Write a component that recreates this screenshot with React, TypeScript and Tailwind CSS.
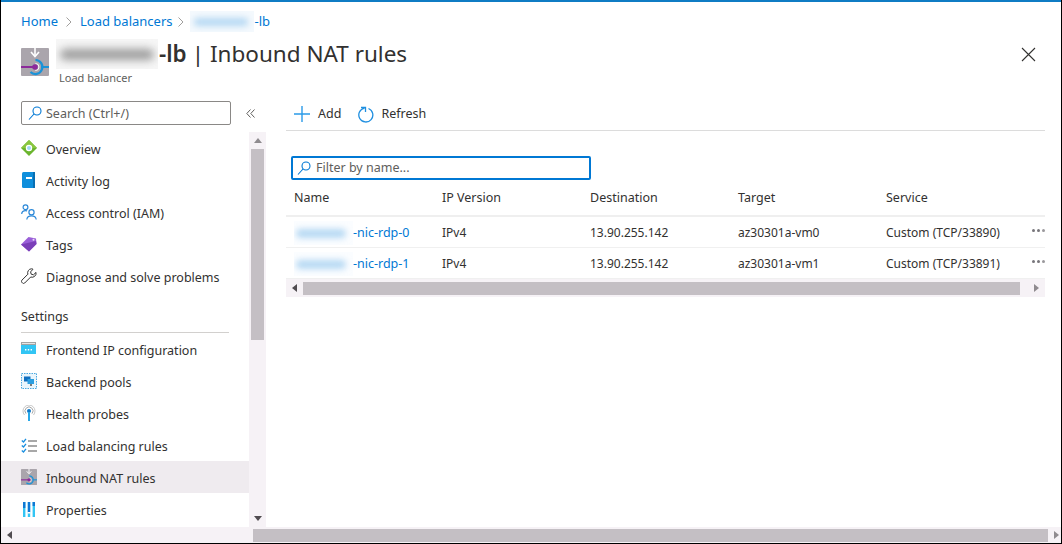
const COLUMNS = ["Name", "IP Version", "Destination", "Target", "Service"];

const ROWS = [
  { nic: "-nic-rdp-0", target: "az30301a-vm0", service: "Custom (TCP/33890)" },
  { nic: "-nic-rdp-1", target: "az30301a-vm1", service: "Custom (TCP/33891)" },
];

function LbIcon({ size }: { size: number }) {
  return (
    <svg width={size} height={size} viewBox="0 0 28 28">
      <rect width="28" height="28" rx="1" fill="#aaa5ac" />
      <path d="M14 0v7" stroke="#fff" strokeWidth="1.6" />
      <path d="M10 4l4 4.5L18 4" stroke="#fff" strokeWidth="1.6" fill="none" />
      <path d="M0 19h14" stroke="#8c2a9a" strokeWidth="2" />
      <path d="M20 19h8" stroke="#1b93d8" strokeWidth="2" />
      <path d="M14.5 12a7 7 0 1 1-5 12" stroke="#1b93d8" strokeWidth="2.2" fill="none" />
      <path d="M14.5 15.5a3.5 3.5 0 1 1-.1 7" stroke="#fff" strokeWidth="1" fill="none" />
      <circle cx="14" cy="19" r="2.8" fill="#8c2a9a" />
    </svg>
  );
}

function MagnifierIcon() {
  return (
    <svg width="14" height="14" viewBox="0 0 14 14" fill="none" stroke="#0078d4" strokeWidth="1.1">
      <circle cx="9" cy="5" r="4" />
      <path d="M6 8l-5 5.500" />
    </svg>
  );
}

function OverviewIcon() {
  return (
    <svg width="16" height="16" viewBox="0 0 16 16">
      <path d="M8 0l8 8-8 8-8-8z" fill="#6bb52e" />
      <path d="M8 0l8 8H0z" fill="#8ac63f" />
      <circle cx="8" cy="8" r="2.6" fill="#9fd9f5" stroke="#fff" strokeWidth="1.2" />
    </svg>
  );
}

function ActivityIcon() {
  return (
    <svg className="ml-[1px]" width="13" height="16" viewBox="0 0 13 16">
      <rect width="13" height="16" rx="1.5" fill="#0f8fdc" />
      <rect x="11" y="0" width="2" height="16" fill="#0a6fb2" />
      <rect x="4" y="5" width="6" height="2" fill="#fff" />
    </svg>
  );
}

function AccessIcon() {
  return (
    <svg width="16" height="16" viewBox="0 0 16 16" fill="none" stroke="#2b88d8" strokeWidth="1.2">
      <circle cx="4.500" cy="3.200" r="2.400" />
      <path d="M.7 10c0-2 1.500-3.400 3.800-3.400.6 0 1.100.1 1.600.3" />
      <circle cx="10.500" cy="8.200" r="2.600" />
      <path d="M5.800 15.500c.2-2.300 2-3.700 4.700-3.700s4.500 1.400 4.700 3.700" />
    </svg>
  );
}

function TagIcon() {
  return (
    <svg width="16" height="16" viewBox="0 0 16 16">
      <path d="M0 8.500L7.500 1 15 2.500 15.500 8 8 15.500z" fill="#9a5fd8" />
      <path d="M0 8.500L8 15.500l7.500-7.500L15 5z" fill="#7a3fb8" />
      <circle cx="12.500" cy="3.800" r="1" fill="#e8d8f8" />
    </svg>
  );
}

function WrenchIcon() {
  return (
    <svg width="16" height="16" viewBox="0 0 16 16" fill="none" stroke="#333" strokeWidth="1">
      <path d="M10.500.8a4 4 0 0 0-3.600 5.400L.9 12.200a1.600 1.600 0 0 0 0 2.200l.6.6a1.600 1.600 0 0 0 2.200 0l6-6a4 4 0 0 0 5.300-4.600l-2.500 2.400-2.300-.6-.6-2.300L12 1.200a4 4 0 0 0-1.500-.4z" />
    </svg>
  );
}

function FrontendIcon() {
  return (
    <svg width="16" height="14" viewBox="0 0 16 14">
      <rect width="15" height="12" fill="#32c5f4" />
      <rect width="15" height="3" fill="#a3a3a3" />
      <rect x="1" y="1" width="13" height="1" fill="#e6e6e6" />
      <path d="M4 7h1.400v1.400H4zM6.800 7h1.400v1.400H6.800zM9.600 7H11v1.400H9.600z" fill="#fff" />
    </svg>
  );
}

function BackendIcon() {
  return (
    <svg width="16" height="16" viewBox="0 0 16 16">
      <rect x=".5" y=".5" width="15" height="15" fill="#e9f5fc" stroke="#4aa8e0" strokeDasharray="1.500 1" />
      <rect x="3" y="3.500" width="6.500" height="5" fill="#0f6fc0" />
      <rect x="6.500" y="6" width="6.500" height="5" fill="#2a9ee0" />
      <path d="M9 11h2v2H9z" fill="#7a7a7a" />
    </svg>
  );
}

function ProbeIcon() {
  return (
    <svg width="16" height="16" viewBox="0 0 16 16" fill="none">
      <path d="M3.500 10a6 6 0 1 1 9 0" stroke="#c8c8c8" />
      <path d="M5 8.600a4 4 0 1 1 6 0" stroke="#a8a8a8" />
      <circle cx="8" cy="6" r="2" fill="#0f78c8" />
      <rect x="7" y="7" width="2" height="9" fill="#28a8e8" />
    </svg>
  );
}

function RulesIcon() {
  return (
    <svg width="16" height="15" viewBox="0 0 16 15" fill="none">
      <path d="M.8 2.500L2.500 4 5 .8M.8 7.500L2.500 9 5 5.800M.8 12.500L2.500 14 5 10.800" stroke="#1a8fe0" strokeWidth="1.3" />
      <path d="M7 3h9M7 8h9M7 13h9" stroke="#8c8c8c" strokeWidth="1.3" />
    </svg>
  );
}

function PropertiesIcon() {
  return (
    <svg className="ml-[2px]" width="12" height="15" viewBox="0 0 12 15">
      <rect x="0" y="0" width="2.400" height="15" fill="#32c5f4" />
      <rect x="0" y="0" width="2.400" height="6" fill="#0f78d4" />
      <rect x="4.800" y="0" width="2.400" height="15" fill="#32c5f4" />
      <rect x="4.800" y="0" width="2.400" height="10" fill="#0f78d4" />
      <rect x="4.800" y="10" width="2.400" height="1.500" fill="#fff" />
      <rect x="9.600" y="0" width="2.400" height="15" fill="#32c5f4" />
      <rect x="9.600" y="0" width="2.400" height="4" fill="#0f78d4" />
    </svg>
  );
}

function MenuRow({ icon, label, active }: { icon: React.ReactNode; label: string; active?: boolean }) {
  return (
    <div className={`flex h-8 shrink-0 items-center pt-[4px] ${active ? "bg-[#efebef]" : ""}`}>
      <div className="-mt-[4px] flex w-[45px] shrink-0 items-center pl-[20px]">{icon}</div>
      <span className="text-[12.5px] text-[#323130]">{label}</span>
    </div>
  );
}

function Triangle({ dir }: { dir: "up" | "down" | "left" | "right" }) {
  const shapes = {
    up: "M0 5L4 0l4 5z",
    down: "M0 0h8L4 5z",
    left: "M5 0v8L0 4z",
    right: "M0 0l5 4-5 4z",
  };
  const isVertical = dir === "up" || dir === "down";
  return (
    <svg width={isVertical ? 8 : 5} height={isVertical ? 5 : 8} viewBox={isVertical ? "0 0 8 5" : "0 0 5 8"}>
      <path d={shapes[dir]} fill={dir === "up" || dir === "right" ? "#8f8b8f" : "#504c50"} />
    </svg>
  );
}

function Crumb() {
  return (
    <svg width="8" height="10" viewBox="0 0 8 10" fill="none" stroke="#a19f9d">
      <path d="M1.500.5L6 5 1.500 9.500" />
    </svg>
  );
}

export default function App() {
  return (
    <div
      className="flex h-[544px] w-[1062px] flex-col overflow-hidden border-x border-b border-black bg-white"
      style={{ fontFamily: '"Noto Sans", "Open Sans", sans-serif' }}
    >
      <div className="h-[2px] shrink-0 bg-[#0f7cc4]" />

      {/* breadcrumb */}
      <div className="flex h-[38px] shrink-0 items-center pl-[20px] pt-[1px] text-[13px] text-[#0078d4]">
        <span>Home</span>
        <span className="mx-[7px]"><Crumb /></span>
        <span>Load balancers</span>
        <span className="mx-[5px]"><Crumb /></span>
        <span className="relative h-[21px] w-[64px] overflow-hidden bg-[#f4f9fd]">
          <span className="absolute left-[4px] top-[7px] h-[8px] w-[54px] rounded-full bg-[#b5d8f3] blur-[3px]" />
        </span>
        <span>-lb</span>
      </div>

      {/* title */}
      <div className="flex h-[58px] shrink-0 items-start pl-[20px] pr-[25px]">
        <div className="mt-[8px] shrink-0"><LbIcon size={28} /></div>
        <div className="-mt-[1px] ml-[7px]">
          <div className="flex h-[30px] items-center text-[22.5px] leading-[30px] text-[#323130]">
            <span className="relative -mt-[1px] h-[30px] w-[102px] overflow-hidden bg-[#f6f6f6]">
              <span className="absolute left-[4px] top-[10px] h-[11px] w-[94px] rounded-full bg-[#9c9c9c] blur-[4px]" />
            </span>
            <span className="ml-[1px] font-semibold">-lb</span>
            <span className="ml-[5px]">| Inbound NAT rules</span>
          </div>
          <div className="mt-[2px] pl-[3px] text-[11px] leading-[14px] text-[#605e5c]">Load balancer</div>
        </div>
        <svg className="ml-auto mt-[7px]" width="15" height="15" viewBox="0 0 15 15" fill="none" stroke="#323130" strokeWidth="1.1">
          <path d="M1 1l13 13M14 1L1 14" />
        </svg>
      </div>

      {/* body */}
      <div className="flex min-h-0 flex-1">
        {/* sidebar */}
        <div className="flex w-[248px] shrink-0 flex-col">
          <div className="flex h-[34px] shrink-0 items-start pl-[20px] pt-[3px]">
            <div className="flex h-[24px] w-[210px] shrink-0 items-center rounded-[2px] border border-[#8a8886] pl-[6px]">
              <MagnifierIcon />
              <span className="ml-[4px] pt-[2px] text-[12.5px] text-[#605e5c]">Search (Ctrl+/)</span>
            </div>
            <svg className="ml-[15px] mt-[8px] shrink-0" width="9" height="9" viewBox="0 0 9 9" fill="none" stroke="#605e5c">
              <path d="M4.500.5L.8 4.500l3.700 4M8.500.5L4.800 4.500l3.700 4" />
            </svg>
          </div>
          <MenuRow icon={<OverviewIcon />} label="Overview" />
          <MenuRow icon={<ActivityIcon />} label="Activity log" />
          <MenuRow icon={<AccessIcon />} label="Access control (IAM)" />
          <MenuRow icon={<TagIcon />} label="Tags" />
          <MenuRow icon={<WrenchIcon />} label="Diagnose and solve problems" />
          <div className="mx-[20px] mt-[10px] flex h-[31px] shrink-0 items-center border-b border-[#d2d0ce] text-[12.5px] text-[#323130]">
            Settings
          </div>
          <MenuRow icon={<FrontendIcon />} label="Frontend IP configuration" />
          <MenuRow icon={<BackendIcon />} label="Backend pools" />
          <MenuRow icon={<ProbeIcon />} label="Health probes" />
          <MenuRow icon={<RulesIcon />} label="Load balancing rules" />
          <MenuRow icon={<LbIcon size={16} />} label="Inbound NAT rules" active />
          <MenuRow icon={<PropertiesIcon />} label="Properties" />
        </div>

        {/* sidebar scrollbar */}
        <div className="flex w-[17px] shrink-0 flex-col pt-[34px]">
          <div className="flex min-h-0 flex-1 flex-col items-center bg-[#f6f2f6]">
            <div className="flex h-[17px] shrink-0 items-center"><Triangle dir="up" /></div>
            <div className="h-[191px] w-[13px] shrink-0 bg-[#c4bfc4]" />
            <div className="mt-auto flex h-[17px] shrink-0 items-center"><Triangle dir="down" /></div>
          </div>
        </div>

        {/* main */}
        <div className="ml-[20px] flex w-[759px] shrink-0 flex-col">
          <div className="flex h-[33px] shrink-0 items-center border-b border-[#dcdcdc] pl-[8px] text-[12.5px] text-[#323130]">
            <svg width="16" height="16" viewBox="0 0 16 16" fill="none" stroke="#2b9be8" strokeWidth="1.4">
              <path d="M8 0v16M0 8h16" />
            </svg>
            <span className="ml-[8px]">Add</span>
            <svg className="ml-[16px]" width="17" height="17" viewBox="0 0 17 17" fill="none" stroke="#1f8fe0" strokeWidth="1.3">
              <path d="M11.500 2.500a7 7 0 1 1-4-.4" />
              <path d="M4 1.500h4.500V6" />
            </svg>
            <span className="ml-[7px]">Refresh</span>
          </div>
          <div className="ml-[5px] mt-[25px] flex h-[24px] w-[300px] shrink-0 items-center rounded-[2px] border-2 border-[#0078d4] pl-[4px]">
            <MagnifierIcon />
            <span className="ml-[5px] text-[12.5px] text-[#605e5c]">Filter by name...</span>
          </div>

          <div className="mt-[1px] grid h-[36px] shrink-0 grid-cols-[148px_148px_148px_148px_1fr] items-center border-b-2 border-[#efefef] pl-[8px] text-[12.5px] text-[#323130]">
            {COLUMNS.map((c) => (
              <span key={c}>{c}</span>
            ))}
          </div>
          {ROWS.map((row) => (
            <div
              key={row.nic}
              className="grid h-[31px] shrink-0 grid-cols-[148px_148px_148px_148px_1fr] items-center border-b border-[#f0f0f0] pl-[8px] pt-[2px] text-[12px] text-[#323130] last:border-b-0"
            >
              <span className="flex items-center text-[12.5px] text-[#0078d4]">
                <span className="relative h-[24px] w-[59px] overflow-hidden bg-[#fbfdff]">
                  <span className="absolute left-[2px] top-[8px] h-[9px] w-[50px] rounded-full bg-[#b5d8f3] blur-[3px]" />
                </span>
                {row.nic}
              </span>
              <span>IPv4</span>
              <span>13.90.255.142</span>
              <span>{row.target}</span>
              <span className="relative">
                {row.service}
                <span className="absolute right-0 top-[5px] flex gap-[2px]">
                  <span className="h-[3px] w-[3px] rounded-full bg-[#77757a]" />
                  <span className="h-[3px] w-[3px] rounded-full bg-[#77757a]" />
                  <span className="h-[3px] w-[3px] rounded-full bg-[#9a989c]" />
                </span>
              </span>
            </div>
          ))}
          <div className="flex h-[18px] shrink-0 items-center bg-[#f6f2f6]">
            <div className="flex w-[17px] shrink-0 justify-center"><Triangle dir="left" /></div>
            <div className="h-[13px] w-[717px] bg-[#c4bfc4]" />
            <div className="flex flex-1 justify-end pr-[6px]"><Triangle dir="right" /></div>
          </div>
        </div>
      </div>

      {/* page horizontal scrollbar */}
      <div className="flex h-[16px] shrink-0 items-center bg-[#f6f2f6]">
        <div className="flex w-[17px] shrink-0 justify-center"><Triangle dir="left" /></div>
        <div className="mb-[1px] ml-[235px] h-[13px] w-[795px] self-end bg-[#c4bfc4]" />
        <div className="flex flex-1 justify-end pr-[2px]"><Triangle dir="right" /></div>
      </div>
    </div>
  );
}
